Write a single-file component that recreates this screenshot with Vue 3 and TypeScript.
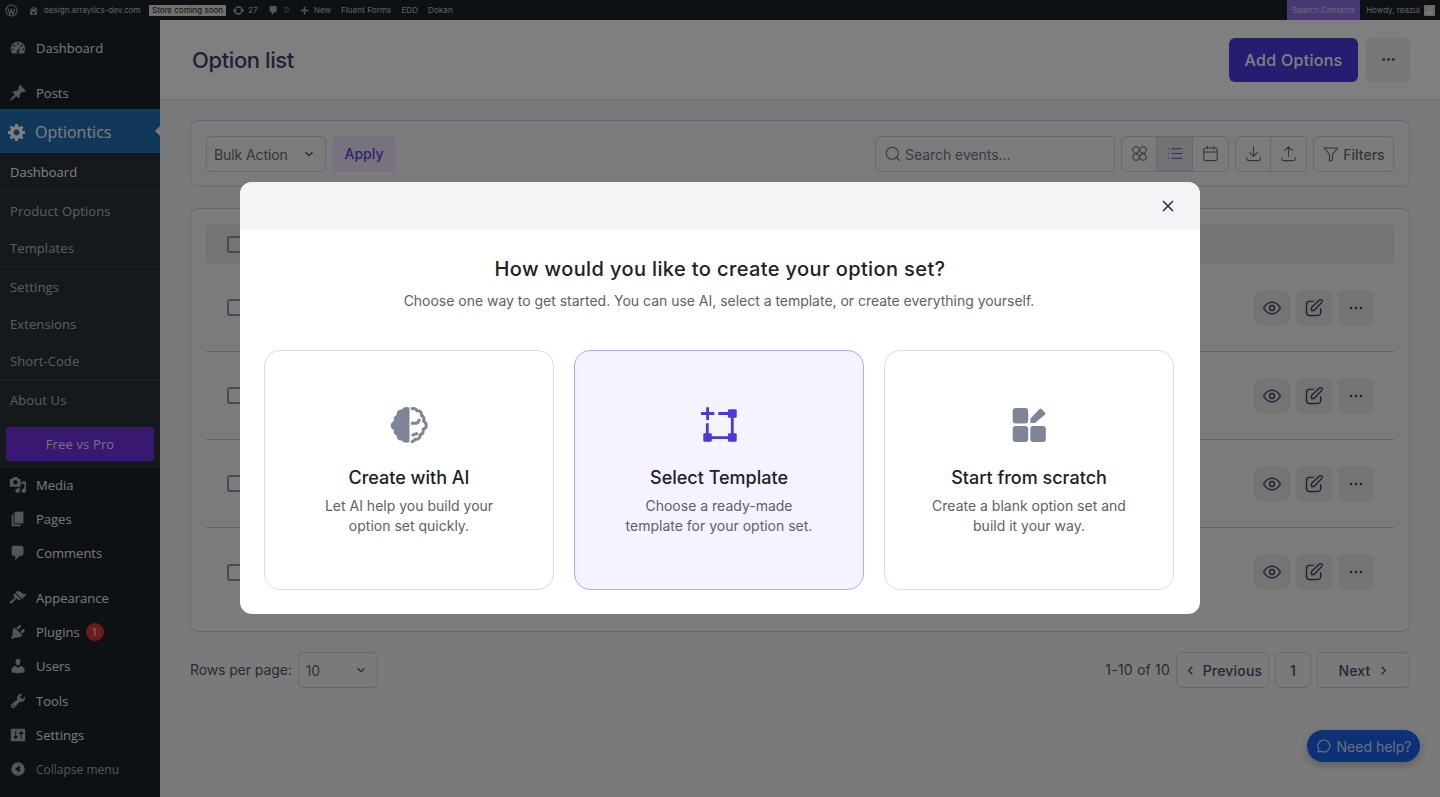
<script setup lang="ts">
const dash: Record<string, string> = {
  dashboard: 'M3.76 16h12.48c1.1-1.37 1.76-3.11 1.76-5 0-4.42-3.58-8-8-8s-8 3.58-8 8c0 1.89.66 3.63 1.76 5zM10 4.5a1 1 0 110 2 1 1 0 010-2zM6 6.5a1 1 0 110 2 1 1 0 010-2zm8 0a1 1 0 110 2 1 1 0 010-2zM4 10.5a1 1 0 110 2 1 1 0 010-2zm12 0a1 1 0 110 2 1 1 0 010-2zM13 8l-2 5.2a1.5 1.5 0 11-1.4-.5z',
  post: 'M10.44 3.02l1.82-1.82 6.36 6.35-1.83 1.82c-1.05-.68-2.48-.57-3.41.36l-.75.75c-.92.93-1.04 2.35-.35 3.41l-1.83 1.82-2.41-2.41-2.8 2.79c-.42.42-3.38 2.71-3.8 2.29s1.86-3.39 2.28-3.81l2.79-2.79L4.1 9.36l1.83-1.82c1.05.69 2.48.57 3.4-.36l.75-.75c.93-.92 1.05-2.35.36-3.41z',
  gear: 'M18 12h-2.18c-.17.7-.44 1.35-.81 1.93l1.54 1.54-2.1 2.1-1.54-1.54c-.58.36-1.23.63-1.91.79V19H8v-2.18c-.68-.16-1.33-.43-1.91-.79l-1.54 1.54-2.12-2.12 1.54-1.54c-.36-.58-.63-1.23-.79-1.91H1V9.03h2.17c.16-.7.44-1.35.8-1.94L2.43 5.55l2.1-2.1 1.54 1.54c.58-.37 1.24-.64 1.93-.81V2h3v2.18c.68.16 1.33.43 1.91.79l1.54-1.54 2.12 2.12-1.54 1.54c.36.59.64 1.24.8 1.94H18V12zm-8.5 1.5c1.66 0 3-1.34 3-3s-1.34-3-3-3-3 1.34-3 3 1.34 3 3 3z',
  media: 'M13 11V4c0-.55-.45-1-1-1h-1.67L9 1H5L3.67 3H2c-.55 0-1 .45-1 1v7c0 .55.45 1 1 1h10c.55 0 1-.45 1-1zM7 4.5c1.38 0 2.5 1.12 2.5 2.5S8.38 9.5 7 9.5 4.5 8.38 4.5 7 5.62 4.5 7 4.5zM14 6h5v10.5c0 1.38-1.12 2.5-2.5 2.5S14 17.88 14 16.5s1.12-2.5 2.5-2.5c.17 0 .34.02.5.05V9h-3V6zm-4 8.05V13h2v3.5c0 1.38-1.12 2.5-2.5 2.5S7 17.88 7 16.5 8.12 14 9.5 14c.17 0 .34.02.5.05z',
  page: 'M6 15V2h10v13H6zm-1 1h8v2H3V5h2v11z',
  comment: 'M5 2h9c1.1 0 2 .9 2 2v7c0 1.1-.9 2-2 2h-2l-5 5v-5H5c-1.1 0-2-.9-2-2V4c0-1.1.9-2 2-2z',
  brush: 'M14.48 11.06L7.41 3.99l1.5-1.5c.5-.56 2.3-.47 3.51.32 1.21.8 1.43 1.28 2.91 2.1 1.18.64 2.45 1.26 4.45.85zm-.71.71L6.7 4.7 4.93 6.47c-.39.39-.39 1.02 0 1.41l1.06 1.06c.39.39.39 1.03 0 1.42-.6.6-1.43 1.11-2.21 1.69-.35.26-.7.53-1.01.84C1.43 13.23.4 14.91 1.2 15.7c.8.79 2.48-.23 3.82-1.57.31-.31.58-.66.84-1.01.58-.78 1.09-1.61 1.69-2.21.39-.39 1.02-.39 1.41 0l1.06 1.06c.39.39 1.02.39 1.41 0z',
  plugin: 'M13.11 4.36L9.87 7.6 8 5.73l3.24-3.24c.35-.34 1.05-.2 1.56.32.52.51.66 1.21.31 1.55zm-8 1.77l.91-1.12 9.01 9.01-1.19.84c-.71.71-2.63 1.16-3.82 1.16H6.14L4.9 17.26c-.59.59-1.54.59-2.12 0-.59-.58-.59-1.53 0-2.12l1.24-1.24v-3.88c0-1.13.4-3.19 1.09-3.89zm7.26 3.97l3.24-3.24c.34-.35 1.04-.21 1.55.31.52.51.66 1.21.31 1.55l-3.24 3.25z',
  users: 'M10 9.25c-2.27 0-2.73-3.44-2.73-3.44C7 4.02 7.82 2 9.97 2c2.16 0 2.98 2.02 2.71 3.81 0 0-.41 3.44-2.68 3.44zm0 2.57L12.72 10c2.39 0 4.52 2.33 4.52 4.53v2.49s-3.65 1.13-7.24 1.13c-3.65 0-7.24-1.13-7.24-1.13v-2.49c0-2.25 1.94-4.48 4.47-4.48z',
  tools: 'M16.68 9.77c-1.34 1.34-3.3 1.67-4.95.99l-5.41 6.52c-.99.99-2.59.99-3.58 0s-.99-2.59 0-3.57l6.52-5.42c-.68-1.65-.35-3.61.99-4.95 1.28-1.28 3.12-1.62 4.72-1.06l-2.89 2.89 2.82 2.82 2.86-2.87c.53 1.58.18 3.39-1.08 4.65zM3.81 16.21c.4.39 1.04.39 1.43 0 .4-.4.4-1.04 0-1.43-.39-.4-1.03-.4-1.43 0-.39.39-.39 1.03 0 1.43z',
  sliders: 'M18 16V4c0-.55-.45-1-1-1H3c-.55 0-1 .45-1 1v12c0 .55.45 1 1 1h14c.55 0 1-.45 1-1zM8 11h1c.55 0 1 .45 1 1s-.45 1-1 1H8v1.5c0 .28-.22.5-.5.5s-.5-.22-.5-.5V13H6c-.55 0-1-.45-1-1s.45-1 1-1h1V5.5c0-.28.22-.5.5-.5s.5.22.5.5V11zm5-2h-1c-.55 0-1-.45-1-1s.45-1 1-1h1V5.5c0-.28.22-.5.5-.5s.5.22.5.5V7h1c.55 0 1 .45 1 1s-.45 1-1 1h-1v5.5c0 .28-.22.5-.5.5s-.5-.22-.5-.5V9z',
  collapse: 'M10 2.5a7.5 7.5 0 100 15 7.5 7.5 0 000-15zM12 6v8l-5.5-4z',
  home: 'M16 8.5l1.53 1.53-1.06 1.06L10 4.62l-6.47 6.47-1.06-1.06L10 2.5l4 4v-2h2v4zm-6-2.46l6 5.99V18H4v-5.97zM12 17v-5H8v5h4z',
  update: 'M10.2 3.28c3.53 0 6.43 2.61 6.92 6h2.08l-3.5 4-3.5-4h2.32c-.45-1.97-2.21-3.45-4.32-3.45-1.45 0-2.73.71-3.54 1.78L4.95 5.66C6.23 4.2 8.11 3.28 10.2 3.28zm-.4 13.44c-3.52 0-6.43-2.61-6.92-6H.8l3.5-4c1.17 1.33 2.33 2.67 3.5 4H5.48c.45 1.97 2.21 3.45 4.32 3.45 1.45 0 2.73-.71 3.54-1.78l1.71 1.95c-1.28 1.46-3.15 2.38-5.25 2.38z',
  plus: 'M17 8.5h-5.5V3h-3v5.5H3v3h5.5V17h3v-5.5H17z',
}

const topMenu = [
  { label: 'Dashboard', icon: 'dashboard', cls: 'first' },
  { label: 'Posts', icon: 'post', cls: 'sep' },
]
const lowerMenu = [
  { label: 'Media', icon: 'media', cls: '' },
  { label: 'Pages', icon: 'page', cls: '' },
  { label: 'Comments', icon: 'comment', cls: '' },
  { label: 'Appearance', icon: 'brush', cls: 'sep' },
  { label: 'Plugins', icon: 'plugin', cls: '', badge: 1 },
  { label: 'Users', icon: 'users', cls: '' },
  { label: 'Tools', icon: 'tools', cls: 'nudge' },
  { label: 'Settings', icon: 'sliders', cls: '' },
  { label: 'Collapse menu', icon: 'collapse', cls: 'dim' },
]
const subGroups = [
  [{ label: 'Dashboard', active: true }],
  [{ label: 'Product Options' }, { label: 'Templates' }],
  [{ label: 'Settings' }, { label: 'Extensions' }, { label: 'Short-Code' }],
  [{ label: 'About Us' }],
]
const rows = [1, 2, 3, 4]
const choices = [
  { title: 'Create with AI', lines: ['Let AI help you build your', 'option set quickly.'], kind: 'ai' },
  { title: 'Select Template', lines: ['Choose a ready-made', 'template for your option set.'], kind: 'template' },
  { title: 'Start from scratch', lines: ['Create a blank option set and', 'build it your way.'], kind: 'scratch' },
]
</script>

<template>
  <div class="page">
    <header class="adminbar">
      <svg class="ab-logo" viewBox="0 0 20 20">
        <circle cx="10" cy="10" r="8.6" fill="none" stroke="currentColor" stroke-width="1.6" />
        <path d="M4.6 7l3 8.6 2-5.6-1-3M9 7l3 8.6 2.4-6.4c.4-1-.1-1.8-.4-2.2" fill="none" stroke="currentColor" stroke-width="1.7" />
      </svg>
      <svg class="ab-icon home" viewBox="0 0 20 20"><path :d="dash.home" /></svg>
      <span class="site">design.arraytics-dev.com</span>
      <span class="pill">Store coming soon</span>
      <svg class="ab-icon upd" viewBox="0 0 20 20"><path :d="dash.update" /></svg>
      <span class="num">27</span>
      <svg class="ab-icon cmt" viewBox="0 0 20 20"><path :d="dash.comment" /></svg>
      <span class="num zero">0</span>
      <svg class="ab-icon add" viewBox="0 0 20 20"><path :d="dash.plus" /></svg>
      <span class="new">New</span>
      <span class="ab-link">Fluent Forms</span>
      <span class="ab-link">EDD</span>
      <span class="ab-link">Dokan</span>
      <span class="search-contacts">Search Contacts</span>
      <span class="howdy">Howdy, reazul</span>
      <span class="avatar">
        <svg viewBox="0 0 20 20"><path :d="dash.users" /></svg>
      </span>
    </header>

    <div class="body">
      <aside class="sidebar">
        <a v-for="item in topMenu" :key="item.label" class="menu-item" :class="item.cls">
          <svg viewBox="0 0 20 20"><path :d="dash[item.icon]" /></svg>
          <span>{{ item.label }}</span>
        </a>
        <a class="menu-current">
          <svg viewBox="0 0 20 20"><path :d="dash.gear" /></svg>
          <span>Optiontics</span>
          <i class="arrow"></i>
        </a>
        <div class="submenu">
          <div v-for="(group, i) in subGroups" :key="i" class="sub-group">
            <a v-for="s in group" :key="s.label" class="sub-item" :class="{ active: s.active }">{{ s.label }}</a>
          </div>
          <button class="free-pro">Free vs Pro</button>
        </div>
        <a v-for="item in lowerMenu" :key="item.label" class="menu-item" :class="item.cls">
          <svg viewBox="0 0 20 20"><path :d="dash[item.icon]" /></svg>
          <span>{{ item.label }}</span>
          <b v-if="item.badge" class="badge">{{ item.badge }}</b>
        </a>
      </aside>

      <main class="main">
        <div class="topbar">
          <h1>Option list</h1>
          <div class="top-actions">
            <button class="add-btn">Add Options</button>
            <button class="more-btn">
              <svg viewBox="0 0 24 24"><circle cx="6" cy="12" r="1.7" /><circle cx="12" cy="12" r="1.7" /><circle cx="18" cy="12" r="1.7" /></svg>
            </button>
          </div>
        </div>

        <div class="content">
          <section class="toolbar card">
            <div class="select bulk"><span>Bulk Action</span>
              <svg viewBox="0 0 24 24"><path d="M6 9l6 6 6-6" /></svg>
            </div>
            <button class="apply">Apply</button>
            <div class="search">
              <svg viewBox="0 0 24 24"><circle cx="11" cy="11" r="8" /><path d="M17 17l4 4" /></svg>
              <span>Search events...</span>
            </div>
            <div class="btn-group">
              <button>
                <svg viewBox="0 0 24 24"><circle cx="7.5" cy="7.5" r="4" /><circle cx="16.5" cy="7.5" r="4" /><circle cx="7.5" cy="16.5" r="4" /><circle cx="16.5" cy="16.5" r="4" /></svg>
              </button>
              <button class="on">
                <svg viewBox="0 0 24 24"><path d="M9 6h12M9 12h12M9 18h12M4 6h.5M4 12h.5M4 18h.5" /></svg>
              </button>
              <button>
                <svg viewBox="0 0 24 24"><rect x="3.5" y="5" width="17" height="16" rx="3" /><path d="M3.5 10h17M8 2.5V6M16 2.5V6" /></svg>
              </button>
            </div>
            <div class="btn-group">
              <button>
                <svg viewBox="0 0 24 24"><path d="M12 3v12M7 10.500l5 5 5-5M3.500 17v1.500a2.500 2.500 0 002.500 2.500h12a2.500 2.500 0 002.500-2.500V17" /></svg>
              </button>
              <button>
                <svg viewBox="0 0 24 24"><path d="M12 15.500V3.500M7 8.500l5-5 5 5M3.500 17v1.500a2.500 2.500 0 002.500 2.500h12a2.500 2.500 0 002.500-2.500V17" /></svg>
              </button>
            </div>
            <button class="filters">
              <svg viewBox="0 0 24 24"><path d="M3 4h18l-7 8.500V20l-4 1.500v-9z" /></svg>
              Filters
            </button>
          </section>

          <section class="table card">
            <div class="thead"><i class="check"></i></div>
            <div v-for="r in rows" :key="r" class="row">
              <i class="check"></i>
              <div class="row-actions">
                <button>
                  <svg viewBox="0 0 24 24"><path d="M2 12s3.600-7 10-7 10 7 10 7-3.600 7-10 7-10-7-10-7z" /><circle cx="12" cy="12" r="3" /></svg>
                </button>
                <button>
                  <svg viewBox="0 0 24 24"><path d="M11 4H7a4 4 0 00-4 4v9a4 4 0 004 4h9a4 4 0 004-4v-4" /><path d="M9 15v-3.500L18.500 2.500a1.800 1.800 0 012.800 2.800L12 15z" /></svg>
                </button>
                <button>
                  <svg class="solid" viewBox="0 0 24 24"><circle cx="6" cy="12" r="1.600" /><circle cx="12" cy="12" r="1.600" /><circle cx="18" cy="12" r="1.600" /></svg>
                </button>
              </div>
            </div>
          </section>

          <footer class="pager">
            <span class="rows-label">Rows per page:</span>
            <div class="select per-page"><span>10</span>
              <svg viewBox="0 0 24 24"><path d="M6 9l6 6 6-6" /></svg>
            </div>
            <span class="count">1-10 of 10</span>
            <button class="pg wide">
              <svg viewBox="0 0 24 24"><path d="M15 6l-6 6 6 6" /></svg>
              Previous
            </button>
            <button class="pg one">1</button>
            <button class="pg wide next">
              Next
              <svg viewBox="0 0 24 24"><path d="M9 6l6 6-6 6" /></svg>
            </button>
          </footer>
        </div>
      </main>
    </div>

    <button class="help">
      <svg viewBox="0 0 24 24"><path d="M12 3a9 9 0 11-4.200 17L3 21l1-4.500A9 9 0 0112 3z" /></svg>
      Need help?
    </button>

    <div class="overlay">
      <div class="modal">
        <div class="modal-head">
          <svg viewBox="0 0 24 24"><path d="M6 6l12 12M18 6L6 18" /></svg>
        </div>
        <div class="modal-body">
          <h2>How would you like to create your option set?</h2>
          <p class="lead">Choose one way to get started. You can use AI, select a template, or create everything yourself.</p>
          <div class="choices">
            <div v-for="c in choices" :key="c.kind" class="choice" :class="{ selected: c.kind === 'template' }">
              <svg v-if="c.kind === 'ai'" class="choice-icon" viewBox="0 0 40 40">
                <path fill="#7f8596" d="M20.500 2.800C18 1.500 14.500 2 13 4.500 9.800 4 7.200 6.500 7.800 9.800 5 11 4 13.800 5 16 2.500 17.300 1.700 19 1.700 20.500c0 2 1.200 3.500 3.300 4.500-1 2.500 0 4.500 2.800 5.500-.5 3.200 2 5.500 5.200 5 1.500 2.500 5 2.800 7.500 1.500z" />
                <path fill="none" stroke="#7f8596" stroke-width="3" stroke-linejoin="round" d="M22 4c2.500-1 5-.3 6 1.800 3.200-.5 5 1.700 4.500 4.700 2.300 1 3 3.500 2 5.500 2.300 1.300 2.800 3 2.800 4.500 0 2-1.300 3.200-3.300 4 1 2.500-.2 4.500-2.800 5.300.4 3-2.300 5-5 4.400-1 2-2.500 2.500-4.200 2M22 18.300h4.500c2.500 0 4-2 3.500-4.500M23 31c2-2.500 4-2 6-2.500" />
              </svg>
              <svg v-else-if="c.kind === 'template'" class="choice-icon" viewBox="0 0 40 40">
                <g fill="#4a38d8">
                  <rect x="29" y="4.300" width="8.700" height="8.500" rx="1.200" />
                  <rect x="4.300" y="28.300" width="8.500" height="8.500" rx="1.200" />
                  <rect x="29" y="28.300" width="8.700" height="8.500" rx="1.200" />
                </g>
                <path fill="none" stroke="#4a38d8" stroke-width="2.800" d="M33.300 12v17M12 32.700h18M8.300 18.300V29M19.300 8.500H30M2 8.500h13.300M8.600 2.300V15" />
              </svg>
              <svg v-else class="choice-icon" viewBox="0 0 40 40">
                <g fill="#7f8596">
                  <rect x="3.700" y="3" width="15.500" height="15.500" rx="3" />
                  <rect x="3.700" y="21" width="15.500" height="16" rx="3" />
                  <rect x="21.300" y="21" width="15.500" height="16" rx="3" />
                  <path d="M21.500 18v-4.500L30.500 4a1.500 1.500 0 012 0L36 7.500a1.500 1.500 0 010 2L26 18z" />
                </g>
              </svg>
              <h3>{{ c.title }}</h3>
              <p v-for="line in c.lines" :key="line">{{ line }}</p>
            </div>
          </div>
        </div>
      </div>
    </div>
  </div>
</template>

<style scoped>
.page {
  width: 1440px;
  height: 797px;
  position: relative;
  overflow: hidden;
  font-family: Inter, "Liberation Sans", sans-serif;
  background: #f5f5f6;
  color: #3f3a63;
}
svg {
  display: block;
  flex: none;
}
button {
  font-family: inherit;
  cursor: pointer;
}

/* admin bar */
.adminbar {
  height: 20px;
  background: #1d2327;
  color: #c3c4c7;
  display: flex;
  align-items: center;
  font-size: 8px;
  white-space: nowrap;
}
.adminbar svg {
  fill: #a7aaad;
}
.ab-logo {
  width: 13px;
  height: 13px;
  margin-left: 5px;
  color: #a7aaad;
}
.adminbar .ab-logo {
  fill: none;
}
.ab-icon {
  width: 11px;
  height: 11px;
}
.home {
  margin-left: 10px;
}
.site {
  margin-left: 5px;
  width: 99px;
}
.pill {
  margin-left: 6px;
  width: 77px;
  height: 11px;
  line-height: 11px;
  text-align: center;
  background: #e0e0e0;
  color: #1d2327;
  border-radius: 1px;
}
.upd {
  margin-left: 6px;
  width: 13px;
  height: 13px;
}
.num {
  margin-left: 3px;
  width: 13px;
}
.cmt {
  margin-left: 7px;
}
.zero {
  margin-left: 5px;
  width: 9px;
  opacity: 0.6;
}
.add {
  margin-left: 6px;
}
.new {
  margin-left: 4px;
  width: 17px;
}
.ab-link {
  margin-left: 10px;
  letter-spacing: 0.1px;
}
.search-contacts {
  margin-left: auto;
  width: 73px;
  height: 20px;
  line-height: 20px;
  text-align: center;
  background: #9070e8;
  color: #d8d0f2;
}
.howdy {
  margin-left: 6px;
}
.avatar {
  width: 11px;
  height: 11px;
  margin: 0 5px 0 4px;
  background: #d0d0d0;
}
.adminbar .avatar svg {
  fill: #f0f0f0;
  width: 11px;
  height: 11px;
}

.body {
  display: flex;
  height: 777px;
}

/* sidebar */
.sidebar {
  width: 160px;
  flex: none;
  background: #1d2327;
  font-family: "Open Sans", "Noto Sans", sans-serif;
  font-size: 13px;
  color: #f0f0f1;
}
.menu-item {
  height: 34px;
  display: flex;
  align-items: center;
  padding-left: 9px;
}
.menu-item svg {
  width: 18px;
  height: 18px;
  fill: #a7aaad;
  margin-right: 9px;
}
.menu-item.first {
  margin-top: 11px;
}
.menu-item.sep {
  margin-top: 11px;
}
.menu-item.nudge {
  margin-top: 1px;
}
.menu-item.dim {
  color: #a7aaad;
  font-size: 12px;
}
.badge {
  margin-left: 6px;
  width: 18px;
  height: 18px;
  border-radius: 50%;
  background: #d63638;
  color: #fff;
  font-size: 10px;
  font-weight: 400;
  text-align: center;
  line-height: 18px;
}
.menu-current {
  height: 44px;
  margin-top: -1px;
  background: #2271b1;
  color: #fff;
  display: flex;
  align-items: center;
  padding: 2px 0 0 7px;
  box-sizing: border-box;
  font-size: 16px;
  position: relative;
}
.menu-current svg {
  width: 20px;
  height: 20px;
  fill: #fff;
  margin: -1px 8px 0 0;
}
.arrow {
  position: absolute;
  right: 0;
  top: 17px;
  border: 5px solid transparent;
  border-right-color: #f5f5f6;
  border-left: 0;
}
.submenu {
  background: #2c3338;
  height: 315px;
}
.sub-group {
  padding-top: 1px;
  border-bottom: 1px solid #3c434a;
}
.sub-group:first-child {
  padding-top: 0;
}
.sub-group:nth-child(4) {
  border-bottom: 0;
}
.sub-item {
  display: block;
  height: 37px;
  line-height: 39px;
  padding-left: 10px;
  letter-spacing: 0.1px;
  color: rgba(240, 246, 252, 0.7);
}
.sub-item.active {
  color: #fff;
  font-weight: 500;
  letter-spacing: 0;
}
.free-pro {
  display: block;
  width: 148px;
  height: 34px;
  margin: 9px 0 0 6px;
  border: 0;
  border-radius: 3px;
  background: #7030e0;
  color: #e8e4f4;
  font-family: "Open Sans", sans-serif;
  font-size: 13px;
  font-weight: 500;
  letter-spacing: 0.15px;
}

/* main */
.main {
  flex: 1;
  min-width: 0;
}
.topbar {
  height: 79px;
  background: #fff;
  border-bottom: 1px solid #d7dde8;
  display: flex;
  align-items: center;
  justify-content: space-between;
  padding: 0 30px 0 32px;
}
h1 {
  margin: 0;
  font-size: 22px;
  font-weight: 500;
  letter-spacing: -0.4px;
  color: #443e72;
}
.top-actions {
  display: flex;
  gap: 8px;
}
.add-btn {
  width: 129px;
  height: 44px;
  border: 0;
  border-radius: 6px;
  background: #4a3ae0;
  color: #fff;
  font-size: 16px;
  font-weight: 500;
  letter-spacing: 0.3px;
}
.more-btn {
  width: 44px;
  height: 44px;
  border: 0;
  border-radius: 6px;
  background: #eeeeef;
  display: flex;
  align-items: center;
  justify-content: center;
}
.more-btn svg {
  width: 19px;
  height: 19px;
  fill: #3f3a63;
}
.content {
  padding: 20px 30px 0;
}
.card {
  border: 1px solid #ccd6ee;
  border-radius: 8px;
  background: #f7f7f8;
  box-sizing: border-box;
}
.toolbar {
  height: 67px;
  display: flex;
  align-items: center;
  padding: 0 15px;
}
.select {
  height: 36px;
  box-sizing: border-box;
  border: 1px solid #c8d2e6;
  border-radius: 5px;
  display: flex;
  align-items: center;
  justify-content: space-between;
  padding: 0 9px 0 7px;
  font-size: 14px;
  letter-spacing: -0.1px;
  color: #6b6b70;
}
.select span {
  padding-top: 1px;
}
.select svg {
  width: 14px;
  height: 14px;
  fill: none;
  stroke: #4a4a50;
  stroke-width: 2;
}
.bulk {
  width: 120px;
}
.apply {
  margin-left: 6px;
  width: 64px;
  height: 36px;
  border: 0;
  border-radius: 5px;
  background: #f0e4fc;
  color: #5a47d8;
  font-size: 14px;
  font-weight: 500;
}
.search {
  margin-left: auto;
  width: 240px;
  height: 36px;
  box-sizing: border-box;
  border: 1px solid #c8d2e6;
  border-radius: 5px;
  display: flex;
  align-items: center;
  gap: 3px;
  padding-left: 8px;
  font-size: 14px;
  letter-spacing: -0.05px;
  color: #6f7890;
}
.search span {
  padding-top: 1px;
}
.search svg {
  width: 18px;
  height: 18px;
  fill: none;
  stroke: #6f7890;
  stroke-width: 1.5;
}
.btn-group {
  margin-left: 6px;
  display: flex;
  height: 36px;
  box-sizing: border-box;
  border: 1px solid #c8d2e6;
  border-radius: 5px;
  overflow: hidden;
}
.btn-group button {
  width: 36px;
  padding: 0;
  border: 0;
  border-right: 1px solid #c8d2e6;
  background: transparent;
  display: flex;
  align-items: center;
  justify-content: center;
}
.btn-group button:first-child {
  width: 35px;
}
.btn-group button:last-child {
  border-right: 0;
  width: 35px;
}
.btn-group svg {
  width: 19px;
  height: 19px;
  fill: none;
  stroke: #6d6d74;
  stroke-width: 1.3;
  stroke-linecap: round;
}
.btn-group .on {
  background: #e4e4e8;
}
.btn-group .on svg {
  stroke: #6d4be0;
}
.filters {
  margin-left: 6px;
  width: 81px;
  height: 36px;
  box-sizing: border-box;
  border: 1px solid #c8d2e6;
  border-radius: 5px;
  background: transparent;
  display: flex;
  align-items: center;
  justify-content: center;
  gap: 3px;
  padding: 1px 0 0;
  font-size: 14px;
  font-weight: 500;
  color: #6d6d74;
}
.filters svg {
  width: 18px;
  height: 18px;
  fill: none;
  stroke: #6d6d74;
  stroke-width: 1.5;
  stroke-linejoin: round;
}
.table {
  margin-top: 21px;
  height: 424px;
  padding: 15px;
}
.thead {
  height: 40px;
  background: #e8e8ea;
  border-radius: 3px;
  display: flex;
  align-items: center;
  padding-left: 21px;
}
.check {
  width: 17px;
  height: 17px;
  box-sizing: border-box;
  border: 2px solid #8a94ab;
  border-radius: 3px;
  display: block;
}
.row {
  height: 88px;
  box-sizing: border-box;
  border-bottom: 1px solid #c4c9d6;
  display: flex;
  align-items: center;
  justify-content: space-between;
  padding: 0 20px 0 21px;
}
.row:last-child {
  border-bottom: 0;
}
.row-actions {
  display: flex;
  gap: 6px;
}
.row-actions button {
  width: 36px;
  height: 36px;
  padding: 0;
  border: 0;
  border-radius: 8px;
  background: #e9e9eb;
  display: flex;
  align-items: center;
  justify-content: center;
}
.row-actions svg {
  width: 20px;
  height: 20px;
  fill: none;
  stroke: #46416c;
  stroke-width: 1.7;
  stroke-linecap: round;
  stroke-linejoin: round;
}
.row-actions svg.solid {
  fill: #46416c;
  stroke: none;
}
.pager {
  margin-top: 20px;
  display: flex;
  align-items: center;
  font-size: 14px;
  letter-spacing: 0.2px;
  color: #55526e;
}
.rows-label {
  letter-spacing: -0.1px;
  margin-top: -1px;
}
.per-page {
  width: 80px;
  margin-left: 6px;
}
.count {
  margin-left: auto;
  margin-right: 6px;
  margin-top: -1px;
}
.pg {
  height: 36px;
  box-sizing: border-box;
  border: 1px solid #c8d2e6;
  border-radius: 5px;
  background: transparent;
  display: flex;
  align-items: center;
  justify-content: center;
  gap: 5px;
  padding: 0;
  margin-left: 6px;
  font-size: 14px;
  font-weight: 500;
  letter-spacing: 0.2px;
  color: #4e4a70;
}
.pg:first-of-type {
  margin-left: 0;
}
.pg svg {
  width: 15px;
  height: 15px;
  fill: none;
  stroke: #4e4a70;
  stroke-width: 2;
}
.wide {
  width: 93px;
}
.one {
  width: 36px;
}
.next {
  padding-left: 2px;
}
.help {
  position: absolute;
  left: 1307px;
  top: 730px;
  width: 113px;
  height: 32px;
  border: 0;
  border-radius: 16px;
  background: #1b62ee;
  color: #d5e0f7;
  font-size: 14px;
  display: flex;
  align-items: center;
  justify-content: center;
  gap: 5px;
  padding: 0;
  box-shadow: 0 3px 8px rgba(0, 0, 0, 0.25);
}
.help svg {
  width: 16px;
  height: 16px;
  fill: none;
  stroke: #d5e0f7;
  stroke-width: 1.7;
  stroke-linejoin: round;
}

/* modal */
.overlay {
  position: absolute;
  inset: 0;
  background: rgba(0, 0, 0, 0.5);
  display: flex;
  align-items: flex-start;
  justify-content: center;
  padding-top: 182px;
  box-sizing: border-box;
}
.modal {
  width: 960px;
  height: 432px;
  background: #fff;
  border-radius: 12px;
  overflow: hidden;
}
.modal-head {
  height: 48px;
  background: #f3f4f6;
  display: flex;
  align-items: center;
  justify-content: flex-end;
  padding-right: 22px;
}
.modal-head svg {
  width: 20px;
  height: 20px;
  fill: none;
  stroke: #2b2755;
  stroke-width: 1.8;
}
.modal-body {
  padding: 0 26px 0 24px;
  text-align: center;
}
h2 {
  margin: 24px 0 0;
  padding-left: 2px;
  font-size: 20px;
  line-height: 30px;
  font-weight: 450;
  letter-spacing: 0.38px;
  color: #1f2024;
}
.lead {
  margin: 7px 0 0;
  font-size: 14px;
  line-height: 20px;
  letter-spacing: -0.02px;
  color: #5f6068;
}
.choices {
  margin-top: 39px;
  display: grid;
  grid-template-columns: repeat(3, 290px);
  gap: 20px;
}
.choice {
  height: 240px;
  box-sizing: border-box;
  border: 1px solid #dcdde1;
  border-radius: 16px;
  padding-top: 54px;
  display: flex;
  flex-direction: column;
  align-items: center;
}
.choice.selected {
  background: #f5f3ff;
  border-color: #b7aaf5;
}
.choice-icon {
  width: 40px;
  height: 40px;
}
h3 {
  margin: 20px 0 5px;
  font-size: 18px;
  line-height: 26px;
  font-weight: 450;
  color: #1f2024;
}
.choice p {
  margin: 0;
  font-size: 14px;
  line-height: 20px;
  color: #5f6068;
}
</style>

<style>
html,
body {
  margin: 0;
  overflow: hidden;
}
</style>
